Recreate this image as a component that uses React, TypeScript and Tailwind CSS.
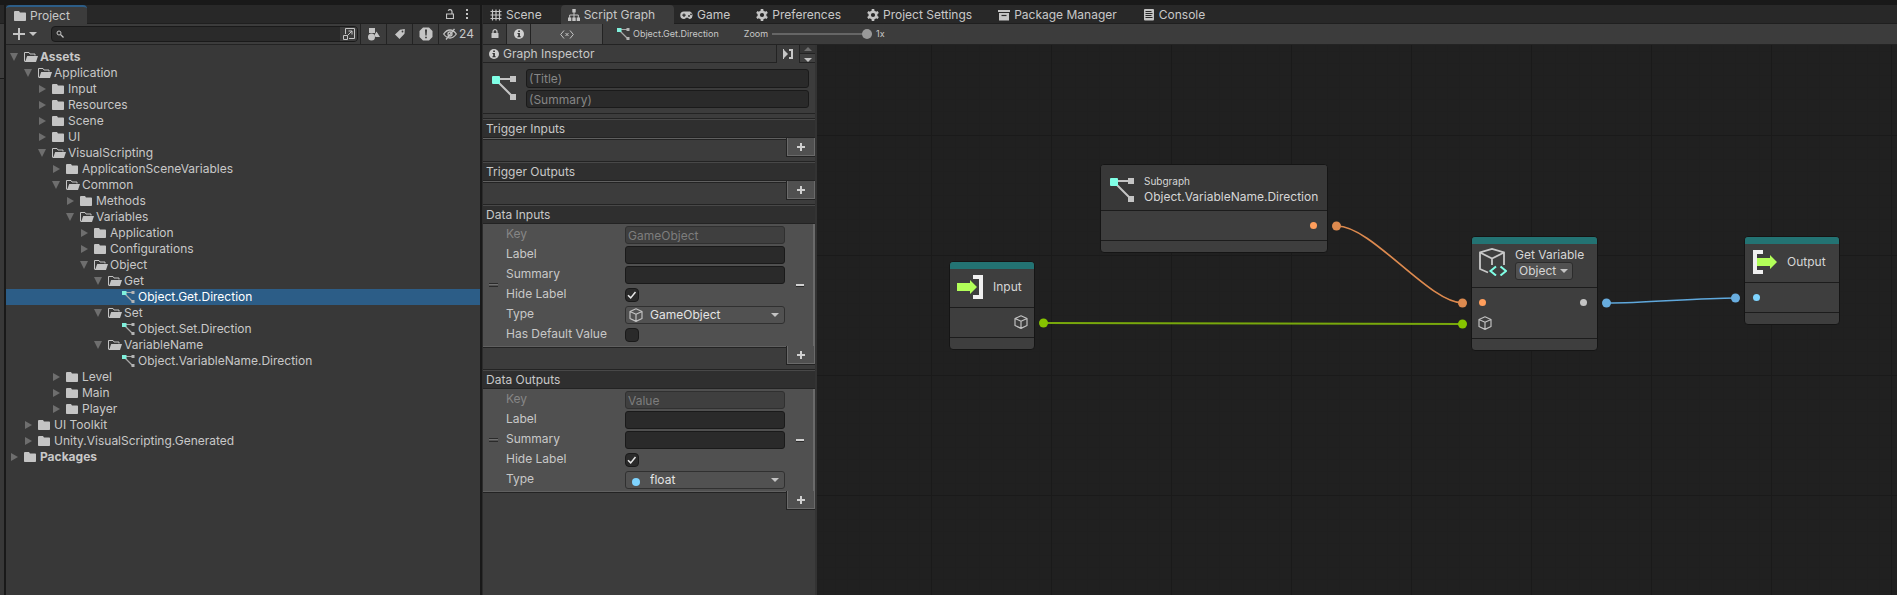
import React from "react";

type IconProps = { className?: string };

const Folder = ({ className = "" }: IconProps) => (
  <svg viewBox="0 0 12 10" className={`h-[10px] w-3 shrink-0 fill-[#c4c4c4] ${className}`}>
    <path d="M1 0h4l1 1.5h5.2q.8 0 .8.8v6.900q0 .8-.8.8H.8q-.8 0-.8-.8V1q0-1 1-1z" />
  </svg>
);

const FolderOpen = () => (
  <svg viewBox="0 0 14 10" className="h-[10px] w-[14px] shrink-0">
    <path d="M.5 9V.5h4.500l1 1.500h5V3.500" fill="none" stroke="#c4c4c4" />
    <path d="M3.200 4H14l-2 6H1z" fill="#c4c4c4" />
    <path d="M.5 9.500h3" stroke="#c4c4c4" />
  </svg>
);

const GraphIcon = ({ className = "" }: IconProps) => (
  <svg viewBox="0 0 24 24" className={`shrink-0 ${className}`}>
    <path d="M6 3h13M5 5l15 15" stroke="#c4c4c4" strokeWidth="2" />
    <path d="M18 0h6v6h-6zM18 18h6v6h-6z" fill="#c4c4c4" />
    <rect y="0" width="8" height="8" rx="1" fill="#80ffe6" />
  </svg>
);

const SmallGraphIcon = () => (
  <svg viewBox="0 0 13 12" className="h-3 w-[13px] shrink-0">
    <path d="M3 1.500h7M2.500 2.500l8 8" stroke="#a8a8a8" strokeWidth="1.200" />
    <path d="M9.500 0h3v3h-3zM9.500 9h3v3h-3z" fill="#b4b4b4" />
    <rect width="4.500" height="4" fill="#80f0dc" />
  </svg>
);

const Cube = ({ className = "" }: IconProps) => (
  <svg viewBox="0 0 14 14" className={`shrink-0 ${className}`} fill="none" stroke="#c0c0c0" strokeWidth="1.200" strokeLinejoin="round">
    <path d="M7 .8l6 2.700v7L7 13.400 1 10.500v-7zM1 3.500l6 2.700 6-2.700M7 6.200v7" />
  </svg>
);

const Info = () => (
  <svg viewBox="0 0 10 10" className="size-[10px] shrink-0">
    <circle cx="5" cy="5" r="5" fill="#d0d0d0" />
    <path d="M4.200 1.500h1.700v1.400H4.200zM3.500 4h2.400v3.300h.8v1H3.400v-1h.8V5h-.7z" fill="#333" />
  </svg>
);

const Lock = () => (
  <svg viewBox="0 0 8 10" className="h-[10px] w-2 shrink-0">
    <path d="M2 5V2.700a2 2 0 0 1 4 0V5" fill="none" stroke="#c8c8c8" strokeWidth="1.200" />
    <rect y="4" x=".5" width="7" height="5" rx=".5" fill="#c8c8c8" />
  </svg>
);

const Caret = ({ className = "" }: IconProps) => (
  <svg viewBox="0 0 8 4" className={`h-1 w-2 shrink-0 ${className}`}>
    <path d="M0 0h8L4 4z" fill="#c4c4c4" />
  </svg>
);

const SceneIcon = () => (
  <svg viewBox="0 0 12 12" className="size-3" stroke="#c4c4c4" strokeWidth="1.200">
    <path d="M2.500.5v11M6 .5v11M9.500.5v11M.5 2.500h11M.5 6h11M.5 9.500h11" />
  </svg>
);
const HierIcon = () => (
  <svg viewBox="0 0 12 12" className="size-3" fill="#c4c4c4">
    <path d="M4.300 0h3.400v3.500H4.300zM0 8.500h3.300V12H0zM4.300 8.500h3.400V12H4.300zM8.700 8.500H12V12H8.700z" />
    <path d="M6 3v6M1.700 9V6h8.600v3" fill="none" stroke="#c4c4c4" />
  </svg>
);
const GameIcon = () => (
  <svg viewBox="0 0 14 10" className="h-[10px] w-[14px]">
    <path d="M4 1.500h6A4 4 0 0 1 10 9Q8.800 9 8 7.800H6Q5.200 9 4 9a3.700 3.700 0 0 1 0-7.500z" fill="#c4c4c4" />
    <path d="M4 3.500v3.400M2.300 5.200h3.400" stroke="#282828" strokeWidth="1.200" />
    <circle cx="9" cy="6" r=".9" fill="#282828" />
    <circle cx="11" cy="4.300" r=".9" fill="#282828" />
  </svg>
);
const GearIcon = () => (
  <svg viewBox="0 0 12 12" className="size-3">
    <circle cx="6" cy="6" r="3.300" fill="none" stroke="#c4c4c4" strokeWidth="2.400" />
    <path d="M6 0v2.500M6 9.500V12M.8 3l2.200 1.300M9 7.700L11.200 9M.8 9L3 7.700M9 4.300L11.200 3" stroke="#c4c4c4" strokeWidth="2.600" />
  </svg>
);
const PackageIcon = () => (
  <svg viewBox="0 0 12 11" className="h-[11px] w-3">
    <path d="M0 0h12v2H0zM1 3h10v7.500H1z" fill="#c4c4c4" />
    <path d="M3.500 5.500h5" stroke="#282828" strokeWidth="1.200" />
  </svg>
);
const ConsoleIcon = () => (
  <svg viewBox="0 0 10 12" className="h-3 w-[10px]">
    <rect width="10" height="11.500" rx="1" fill="#c4c4c4" />
    <path d="M1.500 2.500h6M1.500 4.500h7M1.500 6.500h6M1.500 8.500h7" stroke="#282828" />
  </svg>
);

type Row = { d: number; name: string; kind: "open" | "closed" | "file" };
const rows: Row[] = [
  { d: 0, name: "Assets", kind: "open" },
  { d: 1, name: "Application", kind: "open" },
  { d: 2, name: "Input", kind: "closed" },
  { d: 2, name: "Resources", kind: "closed" },
  { d: 2, name: "Scene", kind: "closed" },
  { d: 2, name: "UI", kind: "closed" },
  { d: 2, name: "VisualScripting", kind: "open" },
  { d: 3, name: "ApplicationSceneVariables", kind: "closed" },
  { d: 3, name: "Common", kind: "open" },
  { d: 4, name: "Methods", kind: "closed" },
  { d: 4, name: "Variables", kind: "open" },
  { d: 5, name: "Application", kind: "closed" },
  { d: 5, name: "Configurations", kind: "closed" },
  { d: 5, name: "Object", kind: "open" },
  { d: 6, name: "Get", kind: "open" },
  { d: 7, name: "Object.Get.Direction", kind: "file" },
  { d: 6, name: "Set", kind: "open" },
  { d: 7, name: "Object.Set.Direction", kind: "file" },
  { d: 6, name: "VariableName", kind: "open" },
  { d: 7, name: "Object.VariableName.Direction", kind: "file" },
  { d: 3, name: "Level", kind: "closed" },
  { d: 3, name: "Main", kind: "closed" },
  { d: 3, name: "Player", kind: "closed" },
  { d: 1, name: "UI Toolkit", kind: "closed" },
  { d: 1, name: "Unity.VisualScripting.Generated", kind: "closed" },
  { d: 0, name: "Packages", kind: "closed" },
];

function TreeRow({ row }: { row: Row }) {
  const selected = row.name === "Object.Get.Direction";
  return (
    <li
      role="treeitem"
      aria-level={row.d + 1}
      aria-selected={selected}
      aria-expanded={row.kind === "file" ? undefined : row.kind === "open"}
      className={`flex h-4 items-center ${selected ? "bg-[#2c5d87] text-white" : ""} ${row.d === 0 ? "font-bold" : ""}`}
      style={{ paddingLeft: 4 + row.d * 14 }}
    >
      <span className="w-[14px] shrink-0">
        {row.kind !== "file" && (
          <svg viewBox="0 0 8 8" className="size-2 fill-[#6e6e6e]">
            <path d={row.kind === "open" ? "M0 0h8L4 8z" : "M1 0l7 4-7 4z"} />
          </svg>
        )}
      </span>
      <span className="flex w-4 shrink-0">
        {row.kind === "file" ? <SmallGraphIcon /> : row.kind === "open" ? <FolderOpen /> : <Folder />}
      </span>
      <span className="whitespace-nowrap">{row.name}</span>
    </li>
  );
}

function ProjectPanel() {
  return (
    <section aria-label="Project" className="flex w-[474px] shrink-0 flex-col bg-[#383838]">
      <div className="flex h-[19px] items-center border-b border-[#1f1f1f] bg-[#282828]">
        <button className="flex h-[19px] w-[81px] items-center gap-1 rounded-t-sm border-t-2 border-[#2c5d87] bg-[#3c3c3c] pl-2 pt-px">
          <Folder />
          Project
        </button>
        <div className="grow" />
        <button aria-label="Lock" className="mr-3">
          <svg viewBox="0 0 8 10" className="h-[10px] w-2" fill="none" stroke="#c4c4c4">
            <path d="M.5 5h7v4.500h-7zM6 5V2.500a2 2 0 0 0-3.800-.8" strokeWidth="1.200" />
          </svg>
        </button>
        <button aria-label="More" className="mr-3">
          <svg viewBox="0 0 2 10" className="h-[10px] w-[2px] fill-[#c4c4c4]">
            <path d="M0 0h2v2H0zM0 4h2v2H0zM0 8h2v2H0z" />
          </svg>
        </button>
      </div>
      <div className="flex h-[21px] items-center border-b border-[#232323] bg-[#3c3c3c]">
        <button aria-label="Create" className="ml-[7px] flex w-[38px] items-center gap-1">
          <svg viewBox="0 0 12 12" className="size-3">
            <path d="M6 0v12M0 6h12" stroke="#c4c4c4" strokeWidth="2" />
          </svg>
          <Caret />
        </button>
        <div className="flex h-4 w-[307px] items-center overflow-hidden rounded border border-[#1a1a1a] bg-[#2a2a2a]">
          <svg viewBox="0 0 8 8" className="ml-1 size-2 shrink-0" fill="none" stroke="#c4c4c4">
            <circle cx="3" cy="3" r="2" />
            <path d="M4.500 4.500l3 3" strokeWidth="1.200" />
          </svg>
          <input aria-label="Search" className="min-w-0 grow bg-transparent px-1 outline-none" />
          <button aria-label="Open in search" className="flex h-full w-[17px] items-center justify-center bg-[#3c3c3c]">
            <svg viewBox="0 0 12 12" className="size-3" fill="none" stroke="#c4c4c4">
              <path d="M2.500 6V.5h9v10H6M.5 7.500h4v4h-4zM4.500 7.500L9 3M5.500 3H9v3.500" />
            </svg>
          </button>
        </div>
        <div className="ml-[2px] flex h-full">
          <button aria-label="Filter by type" className="flex w-[26px] items-center justify-center border-l border-[#232323]">
            <svg viewBox="0 0 12 13" className="h-[13px] w-3 fill-[#c4c4c4]">
              <path d="M1 0h6v5H1zM8.500 3.500L12 9H7.500L6.500 7z" />
              <circle cx="3.500" cy="9" r="3.500" />
            </svg>
          </button>
          <button aria-label="Filter by label" className="flex w-[26px] items-center justify-center border-l border-[#232323]">
            <svg viewBox="0 0 10 10" className="size-[10px]">
              <path d="M5 .8L9.800 0 9.500 4.800 4.500 10 0 5.500z" fill="#c4c4c4" />
              <circle cx="7.500" cy="2.500" r=".9" fill="#3c3c3c" />
            </svg>
          </button>
          <button aria-label="Filter by import errors" className="flex w-[26px] items-center justify-center border-l border-[#232323]">
            <svg viewBox="0 0 14 14" className="size-[14px]">
              <path d="M4 .5h6L13.500 4v6L10 13.500H4L.5 10V4z" fill="#c4c4c4" />
              <path d="M6 2.500h2L7.600 8.500H6.400zM6.200 9.700h1.600v1.600H6.200z" fill="#333" />
            </svg>
          </button>
          <button aria-label="Hidden items" className="flex items-center gap-[2px] border-l border-[#232323] pl-1">
            <svg viewBox="0 0 14 12" className="h-3 w-[14px]" fill="none" stroke="#c4c4c4" strokeWidth="1.300">
              <path d="M.7 6Q3.500 2 7 2t6.300 4Q10.500 10 7 10T.7 6zM11.500.8L3 11.500" />
              <circle cx="7" cy="6" r="2" />
            </svg>
            24
          </button>
        </div>
      </div>
      <ul role="tree" className="grow pt-1">
        {rows.map((r, i) => (
          <TreeRow key={i} row={r} />
        ))}
      </ul>
    </section>
  );
}

const tabs = [
  { name: "Scene", icon: <SceneIcon /> },
  { name: "Script Graph", icon: <HierIcon />, active: true },
  { name: "Game", icon: <GameIcon /> },
  { name: "Preferences", icon: <GearIcon /> },
  { name: "Project Settings", icon: <GearIcon /> },
  { name: "Package Manager", icon: <PackageIcon /> },
  { name: "Console", icon: <ConsoleIcon /> },
];

function PlusFooter({ label }: { label: string }) {
  return (
    <div className="flex h-[23px] items-start">
      <div className="mr-[-1px] h-[2px] grow border-b border-t border-b-[#232323] border-t-[#606060]" />
      <button
        aria-label={label}
        className="h-[19px] w-[29px] border-b border-l border-[#232323] bg-[#505050]"
      >
        <span className="flex h-full items-center justify-center border border-t-0 border-[#6a6a6a]">
          <svg viewBox="0 0 8 8" className="size-2">
            <path d="M4 0v8M0 4h8" stroke="#d0d0d0" strokeWidth="2" />
          </svg>
        </span>
      </button>
    </div>
  );
}

function Section({ title, children }: { title: string; children?: React.ReactNode }) {
  return (
    <section>
      <h3 className="h-5 border-b border-t border-[#232323] bg-[#2f2f2f]">
        <span className="flex h-[18px] items-center border-t border-[#484848] pl-[3px]">{title}</span>
      </h3>
      {children}
      <PlusFooter label={`Add to ${title}`} />
    </section>
  );
}

const field = "h-[18px] w-[160px] rounded-[3px] border px-[2px] outline-none";

function PortForm({ id, keyName, type, hasDefault }: { id: string; keyName: string; type: string; hasDefault?: boolean }) {
  const label = "w-[119px] shrink-0 pb-[2px]";
  const row = "flex h-5 items-center";
  return (
    <div className="flex items-center border-r-2 border-[#6a6a6a] bg-[#505050] py-px">
      <svg viewBox="0 0 9 4" className="ml-[6px] mr-2 h-1 w-[9px] shrink-0">
        <path d="M0 .5h9M0 3.500h9" stroke="#2a2a2a" />
        <path d="M0 1.500h9" stroke="#707070" />
      </svg>
      <div className="flex flex-col">
        <div className={`${row} text-[#868686]`}>
          <label htmlFor={`${id}-key`} className={label}>Key</label>
          <input id={`${id}-key`} disabled defaultValue={keyName} className={`${field} border-[#303030] bg-[#3f3f3f] text-[#7d7d7d]`} />
        </div>
        <div className={row}>
          <label htmlFor={`${id}-label`} className={label}>Label</label>
          <input id={`${id}-label`} className={`${field} border-[#1a1a1a] bg-[#2a2a2a]`} />
        </div>
        <div className={row}>
          <label htmlFor={`${id}-summary`} className={label}>Summary</label>
          <input id={`${id}-summary`} className={`${field} border-[#1a1a1a] bg-[#2a2a2a]`} />
        </div>
        <div className={row}>
          <label htmlFor={`${id}-hide`} className={label}>Hide Label</label>
          <Check id={`${id}-hide`} on />
        </div>
        <div className={row}>
          <label htmlFor={`${id}-type`} className={label}>Type</label>
          <div className="relative flex items-center">
            <select id={`${id}-type`} className={`${field} appearance-none border-[#303030] bg-[#515151] pl-6 leading-4 text-[#e4e4e4]`}>
              <option>{type}</option>
            </select>
            <span className="pointer-events-none absolute left-1 flex w-[14px] justify-center">
              {hasDefault ? (
                <Cube className="size-[14px]" />
              ) : (
                <svg viewBox="0 0 8 8" className="mt-[3px] size-2"><circle cx="4" cy="4" r="4" fill="#7fd4ff" /></svg>
              )}
            </span>
            <Caret className="pointer-events-none absolute right-[6px]" />
          </div>
        </div>
        {hasDefault && (
          <div className={row}>
            <label htmlFor={`${id}-def`} className={label}>Has Default Value</label>
            <Check id={`${id}-def`} />
          </div>
        )}
      </div>
      <button aria-label="Remove" className="ml-[11px] h-5 w-2">
        <span className="block h-[3px] border-b border-[#2a2a2a] bg-[#d0d0d0]" />
      </button>
    </div>
  );
}

function Check({ id, on }: { id: string; on?: boolean }) {
  return (
    <span className="relative flex">
      <input
        id={id}
        type="checkbox"
        defaultChecked={on}
        className="peer size-[14px] appearance-none rounded-sm border border-[#1a1a1a] bg-[#2a2a2a]"
      />
      <svg viewBox="0 0 14 14" className="pointer-events-none absolute hidden size-[14px] peer-checked:block">
        <path d="M3 7.200l2.700 2.700L10.500 4" fill="none" stroke="#e8e8e8" strokeWidth="1.500" />
      </svg>
    </span>
  );
}

function Inspector() {
  return (
    <aside className="flex w-[334px] shrink-0 flex-col border-r-2 border-[#333] bg-[#3c3c3c]">
      <div className="flex h-[18px] shrink-0">
        <h2 className="flex grow items-center gap-1 border-b border-r border-[#232323] pl-[6px]">
          <Info />
          Graph Inspector
        </h2>
        <button aria-label="Dock" className="flex w-[22px] items-center justify-center">
          <svg viewBox="0 0 10 10" className="size-[10px]">
            <path d="M.5 0v10" stroke="#c8c8c8" />
            <path d="M1 1L5 5 1 9z" fill="#c8c8c8" />
            <path d="M6 1h3v8H6" fill="none" stroke="#c8c8c8" strokeWidth="2" />
          </svg>
        </button>
        <div className="flex w-4 flex-col border-b border-l border-[#232323] bg-[#353535]">
          <button aria-label="Up" className="flex h-[9px] items-center justify-center border-b border-[#232323]">
            <Caret className="rotate-180 opacity-40" />
          </button>
          <button aria-label="Down" className="flex grow items-end justify-center bg-[#404040]">
            <Caret />
          </button>
        </div>
      </div>
      <div className="flex h-[51px] shrink-0 items-center border-b border-[#232323] pl-[9px] pr-[6px]">
        <GraphIcon className="size-6" />
        <div className="ml-[10px] flex grow flex-col gap-[2px]">
          <input aria-label="Title" placeholder="(Title)" className="h-[19px] rounded-[3px] border border-[#1a1a1a] bg-[#2a2a2a] px-[2px] pt-px placeholder:text-[#868686]" />
          <input aria-label="Summary" placeholder="(Summary)" className="h-[18px] rounded-[3px] border border-[#1a1a1a] bg-[#2a2a2a] px-[2px] pt-px placeholder:text-[#868686]" />
        </div>
      </div>
      <div className="pt-1">
        <Section title="Trigger Inputs" />
        <Section title="Trigger Outputs" />
        <Section title="Data Inputs">
          <PortForm id="in" keyName="GameObject" type="GameObject" hasDefault />
        </Section>
        <Section title="Data Outputs">
          <PortForm id="out" keyName="Value" type="float" />
        </Section>
      </div>
    </aside>
  );
}

const node = "absolute flex flex-col divide-y divide-[#1c1c1c] overflow-hidden rounded-sm border border-[#151515] bg-[#3e3e3e] text-[#d6d6d6]";

const Dot = ({ className }: { className: string }) => <span className={`size-[7px] rounded-full ${className}`} />;

function Canvas() {
  return (
    <main className="relative grow overflow-hidden bg-[#202020]">
      <svg className="absolute inset-0 size-full">
        <defs>
          <pattern id="minor" width="12" height="12" x="6" y="6" patternUnits="userSpaceOnUse">
            <path d="M.5 0v12M0 .5h12" stroke="#1f1f1f" />
          </pattern>
          <pattern id="major" width="120" height="120" x="114" y="90" patternUnits="userSpaceOnUse">
            <path d="M.5 0v120M0 .5h120" stroke="#1a1a1a" />
          </pattern>
        </defs>
        <rect width="100%" height="100%" fill="url(#minor)" />
        <rect width="100%" height="100%" fill="url(#major)" />
        <g fill="none">
          <path d="M520 181C555 181 612 258 646 258" stroke="#dd8a4f" strokeWidth="1.700" />
          <path d="M227 278L646 279" stroke="#78a80c" strokeWidth="2" />
          <path d="M790 258C830 258 879 253 919 253" stroke="#5fa8dc" strokeWidth="1.700" />
        </g>
        <g fill="#dd8a4f">
          <circle cx="519.500" cy="181" r="4.500" />
          <circle cx="645.500" cy="258" r="4.500" />
        </g>
        <g fill="#86c400">
          <circle cx="226.500" cy="278" r="4.500" />
          <circle cx="645.500" cy="279" r="4.500" />
        </g>
        <g fill="#68addf">
          <circle cx="789.500" cy="258" r="4.500" />
          <circle cx="918.500" cy="253" r="4.500" />
        </g>
      </svg>

      <article className={`${node} left-[283px] top-[119px] h-[89px] w-[228px]`}>
        <header className="flex h-[46px] items-center bg-[#383838] pl-[9px]">
          <GraphIcon className="mt-[5px] size-6" />
          <div className="ml-[10px] flex flex-col pt-[3px]">
            <span className="text-[10px] leading-4">Subgraph</span>
            <span className="whitespace-nowrap leading-4">Object.VariableName.Direction</span>
          </div>
        </header>
        <div className="flex h-[30px] items-center justify-end pr-[10px]">
          <Dot className="bg-[#ff9e5c]" />
        </div>
        <div className="grow" />
      </article>

      <article className={`${node} left-[132px] top-[216px] h-[89px] w-[86px]`}>
        <header className="flex h-[46px] items-center gap-[10px] border-t-[7px] border-t-[#237373] pb-[2px] pl-[7px]">
          <svg viewBox="0 0 26 24" className="h-6 w-[26px] shrink-0">
            <path d="M16 0h10v24H16v-4h6V4h-6z" fill="#f0f0f0" />
            <path d="M0 8h13V5l7 7-7 7v-3H0z" fill="#b2ff59" />
          </svg>
          Input
        </header>
        <div className="flex h-[30px] items-center justify-end pr-[6px]">
          <Cube className="mb-[2px] size-[14px]" />
        </div>
        <div className="grow" />
      </article>

      <article className={`${node} left-[654px] top-[191px] h-[115px] w-[127px]`}>
        <header className="flex h-[51px] items-start border-t-[7px] border-t-[#237373] pl-[7px] pt-1">
          <svg viewBox="0 0 28 28" className="size-7 shrink-0" fill="none" strokeWidth="1.800">
            <path d="M9 24.500L1 21V4.500L13 .9l12 3.600V17M1 4.500l12 6 12-6M13 10.500V17" stroke="#c8c8c8" />
            <path d="M17 18.500L11.500 23l5.500 4.500M21.500 18.500L27 23l-5.500 4.500" stroke="#80ffe6" strokeWidth="2" />
          </svg>
          <div className="ml-2 flex flex-col items-start">
            <span className="whitespace-nowrap leading-[14px]">Get Variable</span>
            <span className="relative flex items-center">
              <select aria-label="Variable kind" className="h-[18px] w-[58px] appearance-none rounded-[3px] border border-[#2c2c2c] bg-[#515151] pl-[3px] leading-4 outline-none">
                <option>Object</option>
              </select>
              <Caret className="pointer-events-none absolute right-[5px]" />
            </span>
          </div>
        </header>
        <div className="flex h-[51px] flex-col gap-[10px] pl-[6px] pr-[10px] pt-[11px]">
          <div className="flex justify-between pl-px">
            <Dot className="bg-[#ff9e5c]" />
            <Dot className="bg-[#c4c4c4]" />
          </div>
          <Cube className="size-[14px]" />
        </div>
        <div className="grow" />
      </article>

      <article className={`${node} left-[927px] top-[191px] h-[89px] w-[96px]`}>
        <header className="flex h-[46px] items-center gap-[10px] border-t-[7px] border-t-[#237373] pb-[2px] pl-2">
          <svg viewBox="0 0 24 24" className="size-6 shrink-0">
            <path d="M10 0H0v24h10v-4H4V4h6z" fill="#f0f0f0" />
            <path d="M4 8h13V5l7 7-7 7v-3H4z" fill="#b2ff59" />
          </svg>
          Output
        </header>
        <div className="flex h-[30px] items-center pl-2">
          <Dot className="bg-[#7fd4ff]" />
        </div>
        <div className="grow" />
      </article>
    </main>
  );
}

function GraphWindow() {
  return (
    <section aria-label="Script Graph" className="flex min-w-0 grow flex-col border-l border-[#2c2c2c]">
      <nav className="flex h-[19px] shrink-0 border-b border-[#1f1f1f] bg-[#282828]">
        {tabs.map((t) => (
          <button
            key={t.name}
            className={`flex h-[19px] items-center gap-[3px] whitespace-nowrap rounded-t-sm pl-[6px] pr-[19px] pt-px ${t.active ? "bg-[#3c3c3c]" : ""}`}
          >
            <span className="flex w-[14px] justify-center">{t.icon}</span>
            {t.name}
          </button>
        ))}
      </nav>
      <div className="flex h-[21px] shrink-0 items-center border-b border-[#232323] bg-[#3c3c3c] text-[9px]">
        <button aria-label="Lock" className="flex h-full w-6 items-center justify-center border-r border-[#232323]">
          <Lock />
        </button>
        <button aria-label="Inspector" className="flex h-full w-6 items-center justify-center border-r border-[#232323] bg-[#505050]">
          <Info />
        </button>
        <button aria-label="Variables" className="flex h-full w-[72px] items-center justify-center border-r border-[#232323] bg-[#505050]">
          <svg viewBox="0 0 14 9" className="h-[9px] w-[14px]" fill="none" stroke="#c4c4c4">
            <path d="M4 .5l-3.300 4L4 8.500M10 .5l3.300 4-3.300 4M5.500 3l3 3M8.500 3l-3 3" />
          </svg>
        </button>
        <button className="ml-[14px] flex items-center gap-[3px]">
          <SmallGraphIcon />
          Object.Get.Direction
        </button>
        <label htmlFor="zoom" className="ml-[25px]">Zoom</label>
        <input
          id="zoom"
          type="range"
          defaultValue={100}
          className="ml-1 h-[10px] w-[100px] appearance-none bg-[linear-gradient(#666,#666)] bg-[length:100%_2px] bg-center bg-no-repeat [&::-webkit-slider-thumb]:size-[10px] [&::-webkit-slider-thumb]:appearance-none [&::-webkit-slider-thumb]:rounded-full [&::-webkit-slider-thumb]:bg-[#999]"
        />
        <span className="ml-1">1x</span>
      </div>
      <div className="flex min-h-0 grow">
        <Inspector />
        <Canvas />
      </div>
    </section>
  );
}

export default function App() {
  return (
    <div className="flex min-h-screen gap-[2px] bg-[#191919] pt-[5px] font-['Inter',sans-serif] text-[12px] leading-4 text-[#c8c8c8]">
      <div className="flex w-1 shrink-0 flex-col bg-[#383838]">
        <div className="h-[19px] border-b border-[#1f1f1f] bg-[#282828]" />
        <div className="h-[55px] border-b border-[#1a1a1a] bg-[#3c3c3c]" />
      </div>
      <ProjectPanel />
      <GraphWindow />
    </div>
  );
}
